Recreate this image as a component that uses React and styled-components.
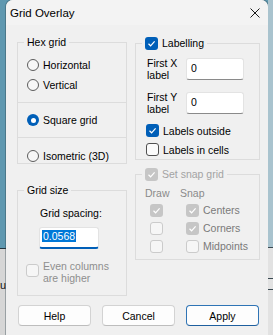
import React from 'react';
import styled, { createGlobalStyle } from 'styled-components';

const Global = createGlobalStyle`
  html, body { margin: 0; padding: 0; }
  body {
    font-family: "Liberation Sans", Arial, sans-serif;
    font-size: 10.5px;
    color: #000;
    overflow: hidden;
    background: #5f98b0;
  }
`;

const Desktop = styled.div`
  display: flex;
  width: 273px;
  height: 335px;
  overflow: hidden;
`;

const Strip = styled.div`
  flex: none;
  width: ${p => p.$w}px;
  display: flex;
  flex-direction: column;
  overflow: hidden;
`;

const Band = styled.div`
  flex: ${p => (p.$h ? 'none' : '1')};
  height: ${p => (p.$h ? `${p.$h}px` : 'auto')};
  background: ${p => p.$bg};
  border-top: ${p => (p.$line ? `1px solid ${p.$line}` : 'none')};
  font-size: 11px;
  white-space: nowrap;
  padding-top: ${p => p.$pt || 0}px;
  color: #111;
`;

const Dialog = styled.div`
  flex: none;
  width: 262px;
  height: 340px;
  background: #f0f0f0;
  border-radius: 7px 7px 0 0;
  box-shadow: 0 0 0 1px rgba(40, 60, 70, 0.35);
  display: flex;
  flex-direction: column;
  overflow: hidden;
`;

const TitleBar = styled.div`
  height: 25px;
  flex: none;
  display: flex;
  align-items: center;
  justify-content: space-between;
  padding: 0 8px 0 4px;
  background: #f3f3f3;
  font-size: 11.5px;
`;

const Body = styled.div`
  padding: 10px 8px 0 11px;
  display: flex;
  flex-direction: column;
`;

const Columns = styled.div`
  display: grid;
  grid-template-columns: 110px 125px;
  column-gap: 8px;
  align-items: start;
`;

const Column = styled.div`
  display: flex;
  flex-direction: column;
  padding-top: ${p => p.$pt || 0}px;
`;

const Group = styled.fieldset`
  margin: ${p => p.$mt || 0}px 0 0 0;
  padding: 0;
  min-width: 0;
  border: 1px solid #dcdcdc;
  border-radius: 0;
`;

const Legend = styled.legend`
  margin-left: 6px;
  padding: 0 3px;
  height: 14px;
  line-height: 14px;
  display: flex;
  align-items: center;
  gap: 4px;
  color: ${p => (p.$disabled ? '#a3a3a3' : '#000')};
`;

const Section = styled.div`
  display: flex;
  flex-direction: column;
  padding: ${p => p.$pad};
  border-bottom: ${p => (p.$divider ? '1px solid #dcdcdc' : 'none')};
`;

const OptionRow = styled.div`
  display: flex;
  align-items: center;
  gap: 4px;
  height: ${p => p.$h}px;
  color: ${p => (p.$disabled ? '#7d7d7d' : '#000')};
`;

const Radio = styled.span`
  flex: none;
  width: 12px;
  height: 12px;
  box-sizing: border-box;
  border-radius: 50%;
  border: ${p => (p.$checked ? '0' : '1px solid #5c5c5c')};
  background: ${p => (p.$checked ? '#005fb8' : '#f7f7f7')};
  display: flex;
  align-items: center;
  justify-content: center;
  &::after {
    content: '';
    display: ${p => (p.$checked ? 'block' : 'none')};
    width: 5px;
    height: 5px;
    border-radius: 50%;
    background: #fff;
  }
`;

const Box = styled.span`
  flex: none;
  width: 13px;
  height: 13px;
  box-sizing: border-box;
  border-radius: 3px;
  display: flex;
  align-items: center;
  justify-content: center;
  margin-left: ${p => p.$ml || 0}px;
  margin-top: ${p => p.$mt || 0}px;
  background: ${p =>
    p.$checked ? (p.$disabled ? '#c6c6c6' : '#005fb8') : p.$disabled ? '#f6f6f6' : '#fbfbfb'};
  border: ${p =>
    p.$checked ? '0' : p.$disabled ? '1px solid #cbcbcb' : '1px solid #505050'};
`;

const Check = ({ checked, disabled, ml, mt }) => (
  <Box $checked={checked} $disabled={disabled} $ml={ml} $mt={mt}>
    {checked && (
      <svg width="9" height="9" viewBox="0 0 9 9">
        <polyline points="1.5,4.8 3.6,6.8 7.6,2.4" fill="none" stroke="#fff" strokeWidth="1.2" />
      </svg>
    )}
  </Box>
);

const SpacingBlock = styled.div`
  display: flex;
  flex-direction: column;
  padding: 10px 0 0 21px;
`;

const Caption = styled.div`
  line-height: 12px;
  margin-left: ${p => p.$ml || 0}px;
  color: ${p => (p.$disabled ? '#8e8e8e' : '#000')};
`;

const Field = styled.div`
  box-sizing: border-box;
  width: ${p => p.$w}px;
  height: ${p => p.$h}px;
  margin-top: ${p => p.$mt || 0}px;
  flex: none;
  background: #fff;
  border: 1px solid #e3e3e3;
  border-bottom: ${p => (p.$focused ? '2px solid #005fb8' : '1px solid #8a8a8a')};
  border-radius: 3px;
  padding: ${p => (p.$focused ? '2px 0 0 2px' : '3px 0 0 4px')};
  line-height: 12px;
`;

const Selected = styled.span`
  display: inline-block;
  background: #0078d7;
  color: #fff;
  line-height: 12px;
  padding: 0 1px;
`;

const EvenRow = styled.div`
  display: flex;
  align-items: flex-start;
  gap: 4px;
  padding: 11px 0 11px 8px;
`;

const FieldRow = styled.div`
  display: flex;
  align-items: flex-start;
  padding-left: 11px;
  margin-top: ${p => p.$mt}px;
`;

const FieldLabel = styled.div`
  width: 39px;
  flex: none;
  line-height: 12px;
`;

const CheckRows = styled.div`
  display: flex;
  flex-direction: column;
  padding: 6px 0 0 10px;
`;

const SnapGrid = styled.div`
  display: grid;
  grid-template-columns: 35px 1fr;
  grid-template-rows: 14px repeat(3, 18px);
  padding: 6px 0 4px 9px;
  color: #7d7d7d;
`;

const HeadCell = styled.div`
  line-height: 12px;
  color: #8a8a8a;
`;

const Cell = styled.div`
  display: flex;
  align-items: center;
  gap: 4px;
  padding-left: ${p => p.$pl || 0}px;
  color: #7a7a7a;
`;

const ButtonRow = styled.div`
  display: flex;
  gap: 11px;
  margin: 9px 0 0 1px;
`;

const Button = styled.button`
  width: 73px;
  height: 21px;
  box-sizing: border-box;
  font-family: inherit;
  font-size: 10.5px;
  color: #000;
  background: #fdfdfd;
  border: 1px solid ${p => (p.$primary ? '#2f74b5' : '#d3d3d3')};
  border-bottom-color: ${p => (p.$primary ? '#1e5f9e' : '#bdbdbd')};
  border-radius: 4px;
  padding: 0;
`;

export default function App() {
  return (
    <>
      <Global />
      <Desktop>
        <Strip $w={6}>
          <Band $h={248} $bg="#5f98b0" />
          <Band $h={57} $bg="#d6d6d6" $line="#24343c" $pt={30}>ur</Band>
          <Band $h={17} $bg="#5f98b0" $line="#3b4a52" />
          <Band $bg="#d6d6d6" $line="#3b4a52" />
        </Strip>
        <Dialog>
          <TitleBar>
            <span>Grid Overlay</span>
            <svg width="10" height="10" viewBox="0 0 10 10">
              <path d="M0.5 0.5 L9.5 9.5 M9.5 0.5 L0.5 9.5" stroke="#1a1a1a" strokeWidth="1" />
            </svg>
          </TitleBar>
          <Body>
            <Columns>
              <Column>
                <Group>
                  <Legend>Hex grid</Legend>
                  <Section $pad="6px 0 7px 9px" $divider>
                    <OptionRow $h={20}><Radio />Horizontal</OptionRow>
                    <OptionRow $h={20}><Radio />Vertical</OptionRow>
                  </Section>
                  <Section $pad="7px 0 7px 9px" $divider>
                    <OptionRow $h={20}><Radio $checked />Square grid</OptionRow>
                  </Section>
                  <Section $pad="10px 0 0 9px">
                    <OptionRow $h={15}><Radio />Isometric (3D)</OptionRow>
                  </Section>
                </Group>
                <Group $mt={19}>
                  <Legend>Grid size</Legend>
                  <SpacingBlock>
                    <Caption $ml={1}>Grid spacing:</Caption>
                    <Field $w={60} $h={22} $mt={8} $focused>
                      <Selected>0.0568</Selected>
                    </Field>
                  </SpacingBlock>
                  <EvenRow>
                    <Check disabled mt={4} />
                    <Caption $disabled>Even columns<br />are higher</Caption>
                  </EvenRow>
                </Group>
              </Column>
              <Column $pt={1}>
                <Group>
                  <Legend>
                    <Check checked />
                    Labelling
                  </Legend>
                  <FieldRow $mt={7}>
                    <FieldLabel>First X<br />label</FieldLabel>
                    <Field $w={58} $h={22} $mt={1}>0</Field>
                  </FieldRow>
                  <FieldRow $mt={10}>
                    <FieldLabel>First Y<br />label</FieldLabel>
                    <Field $w={58} $h={22} $mt={1}>0</Field>
                  </FieldRow>
                  <CheckRows>
                    <OptionRow $h={19}><Check checked />Labels outside</OptionRow>
                    <OptionRow $h={19}><Check />Labels in cells</OptionRow>
                  </CheckRows>
                </Group>
                <Group $mt={7}>
                  <Legend $disabled>
                    <Check checked disabled />
                    Set snap grid
                  </Legend>
                  <SnapGrid>
                    <HeadCell>Draw</HeadCell>
                    <HeadCell>Snap</HeadCell>
                    <Cell><Check checked disabled ml={5} /></Cell>
                    <Cell $pl={6}><Check checked disabled />Centers</Cell>
                    <Cell><Check disabled ml={5} /></Cell>
                    <Cell $pl={6}><Check checked disabled />Corners</Cell>
                    <Cell><Check disabled ml={5} /></Cell>
                    <Cell $pl={6}><Check disabled />Midpoints</Cell>
                  </SnapGrid>
                </Group>
              </Column>
            </Columns>
            <ButtonRow>
              <Button>Help</Button>
              <Button>Cancel</Button>
              <Button $primary>Apply</Button>
            </ButtonRow>
          </Body>
        </Dialog>
        <Strip $w={5}>
          <Band $h={247} $bg="#a9c3ce" />
          <Band $h={30} $bg="#e2e2e2" $line="#3b4a52" />
          <Band $h={10} $bg="#e2e2e2" $line="#3b4a52" />
          <Band $bg="#e2e2e2" $line="#3b4a52" />
        </Strip>
      </Desktop>
    </>
  );
}
